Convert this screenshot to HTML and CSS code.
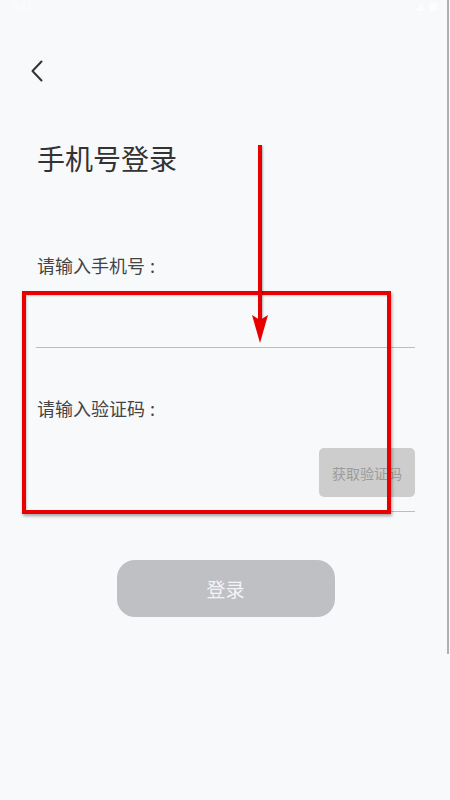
FILE: index.html
```html
<!DOCTYPE html>
<html lang="zh-CN">
<head>
<meta charset="utf-8">
<title>手机号登录</title>
<link rel="stylesheet" href="styles.css">
</head>
<body>
<div class="screen">
  <div class="status-bar">
    <span class="status-time">9:41</span>
    <span class="status-icons">▲ ■</span>
  </div>
  <header class="nav">
    <svg class="back" width="14" height="22" viewBox="0 0 14 22" aria-hidden="true">
      <path d="M11.5 1.5 L2.5 11 L11.5 20.5" fill="none" stroke="#333" stroke-width="2" stroke-linecap="round" stroke-linejoin="round"/>
    </svg>
  </header>
  <main class="content">
    <h1 class="title">手机号登录</h1>
    <label class="label">请输入手机号<span class="colon">:</span></label>
    <div class="field field-phone"></div>
    <label class="label label-code">请输入验证码<span class="colon">:</span></label>
    <div class="field field-code">
      <button class="code-btn" type="button">获取验证码</button>
    </div>
    <button class="login-btn" type="button">登录</button>
  </main>

  <div class="scrollbar"></div>

  <div class="annot-rect"></div>
  <div class="annot-arrow">
    <div class="arrow-shaft"></div>
    <svg class="arrow-head" width="16" height="28" viewBox="0 0 16 28" aria-hidden="true">
      <path d="M0 0 L8 5 L16 0 L8 28 Z" fill="#e80000"/>
    </svg>
  </div>
</div>
</body>
</html>
```

FILE: styles.css
```css
html, body {
  margin: 0;
  padding: 0;
}
body {
  background: #f8f9fb;
  font-family: "Noto Sans CJK SC", "Noto Sans", sans-serif;
  color: #333;
}
.screen {
  position: relative;
  width: 450px;
  height: 800px;
  overflow: hidden;
  background: #f8f9fb;
}
.status-bar {
  display: flex;
  justify-content: space-between;
  height: 14px;
  padding: 0 12px;
  font-size: 10px;
  line-height: 14px;
  color: #fdfdfe;
}
.nav {
  height: 90px;
  display: flex;
  align-items: flex-start;
  padding-left: 30px;
}
.back {
  margin-top: 46px;
  display: block;
}
.content {
  display: flex;
  flex-direction: column;
  padding: 0 35px 0 36px;
}
.title {
  margin: 34px 0 0 1px;
  font-size: 28px;
  line-height: 40px;
  font-weight: 400;
  color: #333;
}
.label {
  display: block;
  margin-top: 74px;
  margin-left: 1px;
  font-size: 18px;
  line-height: 26px;
  color: #444;
}
.colon {
  margin-left: 5px;
}
.label-code {
  margin-top: 47px;
}
.field {
  border-bottom: 1px solid #bdbdbd;
}
.field-phone {
  height: 69px;
}
.field-code {
  height: 90px;
  display: flex;
  justify-content: flex-end;
  align-items: flex-end;
}
.code-btn {
  width: 96px;
  height: 49px;
  margin-bottom: 14px;
  border: none;
  border-radius: 5px;
  background: #cdcdcd;
  color: #9b9b9b;
  font-family: inherit;
  font-size: 14px;
  padding: 0;
}
.login-btn {
  align-self: center;
  width: 218px;
  height: 57px;
  margin-top: 48px;
  border: none;
  border-radius: 18px;
  background: #bfc0c4;
  color: #f4f4f6;
  font-family: inherit;
  font-size: 19px;
  padding: 0;
}
.scrollbar {
  position: absolute;
  right: 1px;
  top: 0;
  width: 2px;
  height: 654px;
  background: #b0b0b0;
}
.annot-rect {
  position: absolute;
  left: 22px;
  top: 291px;
  width: 361px;
  height: 215px;
  border: 4px solid #e80000;
  box-shadow: 1px 2px 3px rgba(0,0,0,0.35), inset 1px 1px 2px rgba(0,0,0,0.2);
}
.annot-arrow {
  position: absolute;
  left: 252px;
  top: 145px;
  width: 16px;
  display: flex;
  flex-direction: column;
  align-items: center;
}
.arrow-shaft {
  width: 4px;
  height: 175px;
  background: #e80000;
  box-shadow: 1px 1px 2px rgba(0,0,0,0.3);
}
.arrow-head {
  display: block;
  margin-top: -5px;
}
```
